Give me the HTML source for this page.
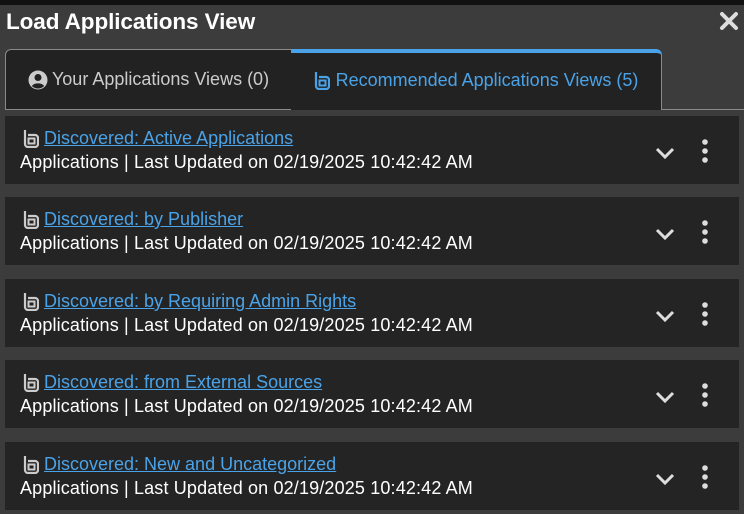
<!DOCTYPE html>
<html><head><meta charset="utf-8"><style>
*{margin:0;padding:0;box-sizing:border-box}
body{width:744px;height:514px;background:#3c3c3c;font-family:"Liberation Sans",sans-serif;position:relative;overflow:hidden}
.top{position:absolute;left:0;top:0;width:744px;height:5px;background:#111}
.title{position:absolute;left:6px;top:9px;font-size:22.5px;font-weight:bold;color:#fff;letter-spacing:-0.1px}
.x{position:absolute;left:719px;top:11px}
.tab1{position:absolute;left:5px;top:49px;width:287px;height:61px;background:#222;border:1px solid #8a8a8a;border-radius:6px 0 0 0;color:#ccc;font-size:18px;display:flex;align-items:center;justify-content:center;gap:4px}
.tab2{position:absolute;left:291px;top:49px;width:371px;height:61px;background:#222;border-top:4px solid #4aa3e8;border-right:1px solid #8a8a8a;border-radius:0 6px 0 0;color:#4aa3e8;font-size:18px;display:flex;align-items:center;justify-content:center;gap:6px;padding-bottom:3px}
.line{position:absolute;left:661px;top:109px;width:83px;height:1px;background:#8a8a8a}
.card{position:absolute;left:5px;width:734px;height:68px;background:#242424}
.card .l1{position:absolute;left:18px;top:12px;display:flex;align-items:center;gap:5px}
.card a{color:#4aa3e8;font-size:18px;text-decoration:underline}
.card .l2{position:absolute;left:15px;top:36px;color:#fff;font-size:18px;white-space:nowrap;letter-spacing:0.15px}
.chev{position:absolute;left:650px;top:30px}
.dots{position:absolute;left:695px;top:22px}
</style></head><body>
<div class="top"></div>
<div class="title">Load Applications View</div>
<svg class="x" width="20" height="20" viewBox="0 0 20 20"><path d="M3 3L17 17M17 3L3 17" stroke="#ddd" stroke-width="4" stroke-linecap="round"/></svg>
<div class="tab1"><svg width="20" height="20" viewBox="0 0 20 20"><circle cx="10" cy="10" r="9.5" fill="#ccc"/><circle cx="10" cy="7.5" r="3.5" fill="#222"/><path d="M3.8 16a7 5 0 0 1 12.4 0A9 9 0 0 1 3.8 16z" fill="#222"/></svg><span>Your Applications Views (0)</span></div>
<div class="tab2"><svg width="16" height="19" viewBox="0 0 16 19"><path d="M2 1v14a3 3 0 0 0 3 3h7a3 3 0 0 0 3-3V9a3 3 0 0 0-3-3H5" fill="none" stroke="#4aa3e8" stroke-width="2.2"/><rect x="5.5" y="9.5" width="6" height="5" fill="none" stroke="#4aa3e8" stroke-width="2"/></svg><span>Recommended Applications Views (5)</span></div>
<div class="line"></div>

<div class="card" style="top:116px"><div class="l1"><svg width="16" height="19" viewBox="0 0 16 19"><path d="M2 1v14a3 3 0 0 0 3 3h7a3 3 0 0 0 3-3V9a3 3 0 0 0-3-3H5" fill="none" stroke="#ccc" stroke-width="2.2"/><rect x="5.5" y="9.5" width="6" height="5" fill="none" stroke="#ccc" stroke-width="2"/></svg><a>Discovered: Active Applications</a></div><div class="l2">Applications | Last Updated on 02/19/2025 10:42:42 AM</div><svg class="chev" width="20" height="14" viewBox="0 0 20 14"><path d="M2 3l8 8 8-8" fill="none" stroke="#ddd" stroke-width="3"/></svg><svg class="dots" width="10" height="26" viewBox="0 0 10 26"><circle cx="5" cy="4" r="2.8" fill="#ddd"/><circle cx="5" cy="13" r="2.8" fill="#ddd"/><circle cx="5" cy="22" r="2.8" fill="#ddd"/></svg></div>

<div class="card" style="top:197px"><div class="l1"><svg width="16" height="19" viewBox="0 0 16 19"><path d="M2 1v14a3 3 0 0 0 3 3h7a3 3 0 0 0 3-3V9a3 3 0 0 0-3-3H5" fill="none" stroke="#ccc" stroke-width="2.2"/><rect x="5.5" y="9.5" width="6" height="5" fill="none" stroke="#ccc" stroke-width="2"/></svg><a>Discovered: by Publisher</a></div><div class="l2">Applications | Last Updated on 02/19/2025 10:42:42 AM</div><svg class="chev" width="20" height="14" viewBox="0 0 20 14"><path d="M2 3l8 8 8-8" fill="none" stroke="#ddd" stroke-width="3"/></svg><svg class="dots" width="10" height="26" viewBox="0 0 10 26"><circle cx="5" cy="4" r="2.8" fill="#ddd"/><circle cx="5" cy="13" r="2.8" fill="#ddd"/><circle cx="5" cy="22" r="2.8" fill="#ddd"/></svg></div>

<div class="card" style="top:279px"><div class="l1"><svg width="16" height="19" viewBox="0 0 16 19"><path d="M2 1v14a3 3 0 0 0 3 3h7a3 3 0 0 0 3-3V9a3 3 0 0 0-3-3H5" fill="none" stroke="#ccc" stroke-width="2.2"/><rect x="5.5" y="9.5" width="6" height="5" fill="none" stroke="#ccc" stroke-width="2"/></svg><a>Discovered: by Requiring Admin Rights</a></div><div class="l2">Applications | Last Updated on 02/19/2025 10:42:42 AM</div><svg class="chev" width="20" height="14" viewBox="0 0 20 14"><path d="M2 3l8 8 8-8" fill="none" stroke="#ddd" stroke-width="3"/></svg><svg class="dots" width="10" height="26" viewBox="0 0 10 26"><circle cx="5" cy="4" r="2.8" fill="#ddd"/><circle cx="5" cy="13" r="2.8" fill="#ddd"/><circle cx="5" cy="22" r="2.8" fill="#ddd"/></svg></div>

<div class="card" style="top:360px"><div class="l1"><svg width="16" height="19" viewBox="0 0 16 19"><path d="M2 1v14a3 3 0 0 0 3 3h7a3 3 0 0 0 3-3V9a3 3 0 0 0-3-3H5" fill="none" stroke="#ccc" stroke-width="2.2"/><rect x="5.5" y="9.5" width="6" height="5" fill="none" stroke="#ccc" stroke-width="2"/></svg><a>Discovered: from External Sources</a></div><div class="l2">Applications | Last Updated on 02/19/2025 10:42:42 AM</div><svg class="chev" width="20" height="14" viewBox="0 0 20 14"><path d="M2 3l8 8 8-8" fill="none" stroke="#ddd" stroke-width="3"/></svg><svg class="dots" width="10" height="26" viewBox="0 0 10 26"><circle cx="5" cy="4" r="2.8" fill="#ddd"/><circle cx="5" cy="13" r="2.8" fill="#ddd"/><circle cx="5" cy="22" r="2.8" fill="#ddd"/></svg></div>

<div class="card" style="top:442px"><div class="l1"><svg width="16" height="19" viewBox="0 0 16 19"><path d="M2 1v14a3 3 0 0 0 3 3h7a3 3 0 0 0 3-3V9a3 3 0 0 0-3-3H5" fill="none" stroke="#ccc" stroke-width="2.2"/><rect x="5.5" y="9.5" width="6" height="5" fill="none" stroke="#ccc" stroke-width="2"/></svg><a>Discovered: New and Uncategorized</a></div><div class="l2">Applications | Last Updated on 02/19/2025 10:42:42 AM</div><svg class="chev" width="20" height="14" viewBox="0 0 20 14"><path d="M2 3l8 8 8-8" fill="none" stroke="#ddd" stroke-width="3"/></svg><svg class="dots" width="10" height="26" viewBox="0 0 10 26"><circle cx="5" cy="4" r="2.8" fill="#ddd"/><circle cx="5" cy="13" r="2.8" fill="#ddd"/><circle cx="5" cy="22" r="2.8" fill="#ddd"/></svg></div>
</body></html>
